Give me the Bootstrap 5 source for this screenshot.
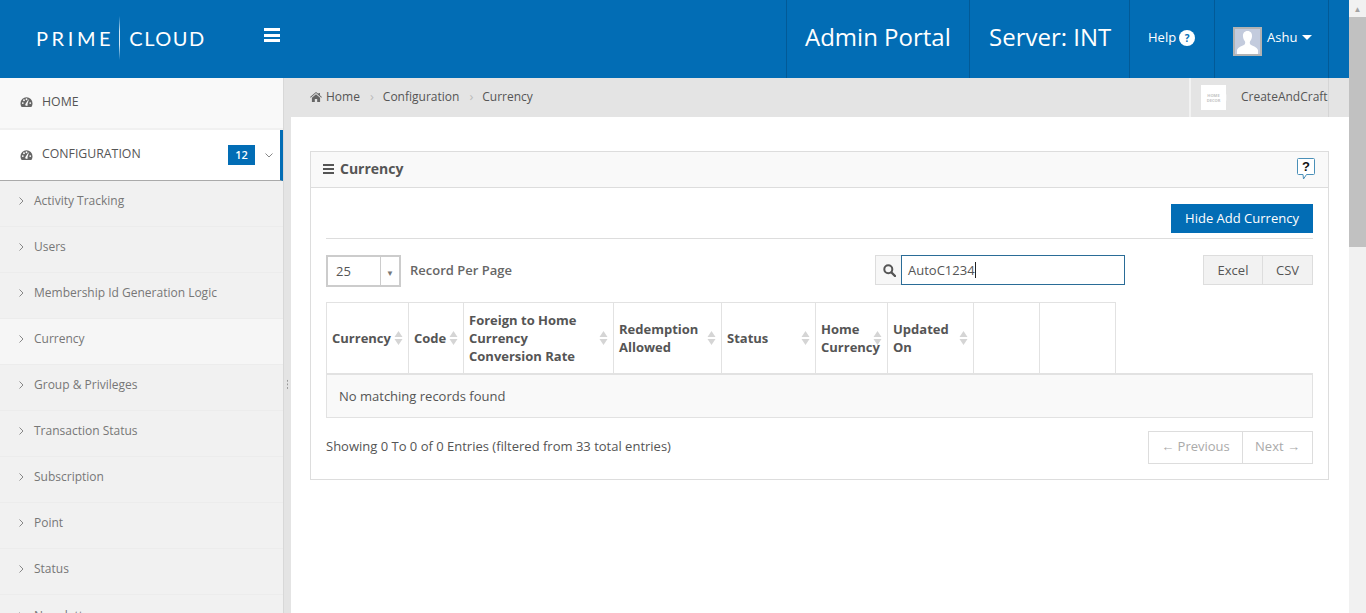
<!DOCTYPE html>
<html lang="en">
<head>
<meta charset="utf-8">
<title>Currency</title>
<link href="https://cdn.jsdelivr.net/npm/bootstrap@5.3.0/dist/css/bootstrap.min.css" rel="stylesheet">
<style>
html,body{height:613px;overflow:hidden}
body{font-family:"Open Sans","Liberation Sans",sans-serif;font-size:13px;color:#555;background:#fff}
.shell{height:613px;overflow:hidden}
.page-col{width:1349px;flex:none}
.body-row{min-height:0}
.main-col{min-width:0}
.sbar{width:17px;flex:none;background:#f1f1f1;position:relative}
.sbar-up{height:17px;color:#a3a3a3;font-size:8px;line-height:17px;text-align:center}
.sbar-thumb{height:230px;background:#c1c1c1}
.top{height:78px;background:#026db5;color:#fff}
.logo-wrap{width:264px;padding-left:36px;padding-bottom:2px;font-family:"Lato","Open Sans",sans-serif;font-weight:400;font-size:20px;letter-spacing:3.6px;line-height:1}
.logo-bar{width:1px;height:44px;background:linear-gradient(#026db5,#cfe5f4 35%,#cfe5f4 65%,#026db5);margin:0 9px 0 5px}
.logo-cloud{letter-spacing:1.5px}
.burger{width:16px;height:14px;border-top:3px solid #fff;border-bottom:3px solid #fff;position:relative;margin-top:-8px}
.burger::after{content:"";position:absolute;left:0;right:0;top:2.5px;height:3px;background:#fff}
.tcell{height:78px;border-left:1px solid #025a97;display:flex;align-items:center;color:#fff}
.t-admin{margin-left:auto;width:183px;font-size:24px;padding-left:18px;padding-bottom:4px}
.t-server{width:160px;font-size:24px;padding-left:19px;padding-bottom:4px}
.t-help{width:85px;padding-left:18px;font-size:13px;padding-bottom:2px}
.t-user{width:115px;padding-left:18px;font-size:13px;border-right:1px solid #025a97}
.t-spacer{width:20px}
.qdot{width:16px;height:16px;border-radius:50%;background:#fff;color:#026db5;font-size:10px;font-weight:700;line-height:16px;text-align:center;margin-left:3px}
.ava{width:29px;height:29px;background:#c3cbdd;border:2px solid #b3b3b3;margin-right:5px;margin-top:5px;display:block}
.ashu{margin-bottom:3px}
.caretd{width:0;height:0;border:5px solid transparent;border-top-color:#fff;border-bottom:0;margin-left:5px;margin-bottom:3px}
.side{width:284px;flex:none;background:#f1f1f1;border-right:1px solid #d8d8d8}
.side-main{height:50px;font-size:12.3px;color:#555;padding-left:20px}
.side-home{background:#f9f9f9;margin-bottom:2px;padding-bottom:2px}
.side-conf{background:#fff;border-right:3px solid #026db5;border-bottom:1px solid #aaa;height:51px;width:283px}
.conf-label{margin-top:-2px}
.ico{fill:#666;margin-right:9px;flex:none}
.cnt{background:#026db5;color:#fff;width:27px;height:20px;font-size:11px;font-weight:600;line-height:20px;text-align:center;margin-left:auto;border-radius:0;padding:0}
.chev{margin:0 7px 0 10px;flex:none}
.sub{height:46px;border-bottom:2px solid #ececec;border-radius:0;background:#f1f1f1;padding:0 0 5px 19px;color:#777;font-size:12px;border-left:0;border-right:0;border-top:0}
.sub.cur{background:#f6f6f6}
.sub svg{margin-right:10px;flex:none}
.gutter{width:7px;flex:none;background:#e4e4e4;padding-top:301px;padding-left:2px}
.grip{width:3px;height:11px;background:radial-gradient(circle,#999 1px,transparent 1px) 0 0/3px 3.6px}
.crumbs{height:39px;background:#e4e4e4;margin-left:-7px;padding-left:26px}
.crumbs .breadcrumb{font-size:12px;margin:0 0 2px;--bs-breadcrumb-item-active-color:#555;--bs-breadcrumb-item-padding-x:10px}
.crumbs .breadcrumb-item{color:#555;display:flex;align-items:center}
.crumbs .breadcrumb-item+.breadcrumb-item::before{content:"›";font-size:13px;color:#bbb;padding-right:9px}
.brandbox{margin-left:auto;width:140px;height:39px;border-left:2px solid #f2f2f2;padding-left:10px;white-space:nowrap;font-size:12px;margin-right:20px;flex:none;overflow:hidden;border-right:1px solid #d5d5d5}
.thumbb{width:25px;height:25px;background:#fff;flex:none;margin-right:15px;color:#c4c4c4;font-size:4px;font-weight:700;line-height:5px;text-align:center;padding-top:8px;box-shadow:10px 0 0 -9.5px #f2f2f2}
.brandname{margin-bottom:2px}
.panel{margin:34px 20px 0 19px;height:329px;border:1px solid #ddd;border-radius:0;--bs-card-bg:#fff}
.panel .card-header{height:36px;background:#f9f9f9;border-bottom:1px solid #ddd;border-radius:0;padding:0 12px 2px;font-size:14px;font-weight:700;color:#555}
.barsi{width:11px;height:10px;border-top:2px solid #555;border-bottom:2px solid #555;position:relative;margin-right:6px}
.barsi::after{content:"";position:absolute;left:0;right:0;top:2px;height:2px;background:#555}
.hbub{margin-left:auto;margin-right:1px}
.panel .card-body{padding:16px 15px 0 15px}
.act{height:35px;border-bottom:1px solid #ddd;margin-bottom:16px}
.btn-blue{background:#026db5;color:#fff;border:0;border-radius:0;font-size:13px;height:29px;width:142px;padding:0;line-height:29px}
.btn-blue:hover{background:#026db5;color:#fff}
.tools{height:32px;margin-bottom:15px}
.picker{width:75px;height:32px;border:2px solid #ccc;font-size:13px;padding-left:8px;padding-top:1px;flex:none;position:relative;color:#555}
.picker-arrow{position:absolute;right:0;top:0;bottom:0;width:19px;border-left:1px solid #ccc;color:#777;font-size:8px;display:flex;align-items:center;justify-content:center;padding-top:3px}
.perpage{margin-left:9px;font-size:13px;font-weight:600;color:#666}
.srch{width:250px;height:30px;margin-left:auto;flex:none;flex-wrap:nowrap}
.srch .input-group-text{width:27px;height:30px;padding:0;justify-content:center;background:#f7f7f7;border:1px solid #ddd;border-right:0;border-radius:0}
.caret-bar{display:inline-block;width:1px;height:16px;background:#222;vertical-align:-3px}
.input-group>.srch-field{flex:1;height:30px;border:1px solid #2a6c97;padding:0 6px;font-size:13px;line-height:28px;color:#555;background:#fff}
.expo{margin-left:78px;height:30px}
.expo .btn{background:#f2f2f2;border:1px solid #ddd;border-radius:0;color:#555;font-size:13px;height:30px;padding:0;line-height:28px}
.x-excel{width:60px}
.x-csv{width:51px}
.thead-tb{table-layout:fixed;width:790px;margin:0;border-collapse:collapse;--bs-table-bg:transparent;--bs-table-color:#555}
.thead-tb th{border:1px solid #e2e2e2;border-bottom:0;height:70px;padding:0 5px;font-size:13px;line-height:18px;font-weight:700;vertical-align:middle;position:relative;color:#555}
.sortg{position:absolute;right:5px;top:50%;margin-top:-8px;width:9px;height:16px;display:block}
.c1{width:82px}.c2{width:55px}.c3{width:150px}.c4{width:108px}.c5{width:94px}.c6{width:72px}.c7{width:86px}.c8{width:66px}.c9{width:76px}
.empty{height:45px;background:#f9f9f9;border:1px solid #e2e2e2;border-top:2px solid #e2e2e2;padding:2px 12px 0;font-size:13px;color:#555}
.foot{margin-top:13px;height:33px;font-size:13px;color:#555}
.pager{margin-left:auto;border:1px solid #ddd;height:33px;color:#aaa;font-size:13px}
.pg-a{width:94px;border-right:1px solid #ddd}
.pg-b{width:69px}
</style>
</head>
<body>
<div class="shell d-flex">
  <div class="page-col d-flex flex-column">
    <header class="top d-flex align-items-center">
      <div class="logo-wrap d-flex align-items-center"><span>PRIME</span><span class="logo-bar"></span><span class="logo-cloud">CLOUD</span></div>
      <div class="burger"></div>
      <div class="tcell t-admin">Admin Portal</div>
      <div class="tcell t-server">Server: INT</div>
      <div class="tcell t-help">Help<span class="qdot">?</span></div>
      <div class="tcell t-user">
        <svg class="ava" viewBox="0 0 25 25"><rect width="25" height="25" fill="#c3cbdd"/><path d="M12.500 2c-3.200 0-4.800 2.400-4.500 5.600.2 2 .9 3.500 1.900 4.700.5.700.4 2.400-.3 3.200C8 17 3 17.800 2 21v4h21v-4c-1-3.200-6-4-7.600-5.500-.7-.8-.8-2.500-.3-3.200 1-1.200 1.700-2.700 1.900-4.700C17.300 4.400 15.700 2 12.500 2z" fill="#fff"/></svg>
        <span class="ashu">Ashu</span><span class="caretd"></span>
      </div>
      <div class="t-spacer"></div>
    </header>
    <div class="body-row d-flex flex-grow-1">
      <aside class="side">
        <div class="side-main side-home d-flex align-items-center">
          <svg class="ico" width="13" height="12" viewBox="0 0 14 12"><path d="M7 1a6.500 6.500 0 0 0-6.500 6.500c0 1.400.4 2.700 1.200 3.800l.3.200h10l.3-.2a6.500 6.500 0 0 0 1.200-3.800A6.500 6.500 0 0 0 7 1zM3 8.200a1 1 0 1 1 0-2 1 1 0 0 1 0 2zm1.300-3.100a1 1 0 1 1 0-2 1 1 0 0 1 0 2zm3.900 4.600a1.500 1.500 0 0 1-2.500-1.400L9 3.400l.5.200-1.500 4.900c.3.300.4.800.2 1.200zM7 4a1 1 0 1 1 0-2 1 1 0 0 1 0 2zm4 4.200a1 1 0 1 1 0-2 1 1 0 0 1 0 2z"/></svg>
          <span>HOME</span>
        </div>
        <div class="side-main side-conf d-flex align-items-center">
          <svg class="ico" width="13" height="12" viewBox="0 0 14 12"><path d="M7 1a6.500 6.500 0 0 0-6.500 6.500c0 1.400.4 2.700 1.200 3.800l.3.200h10l.3-.2a6.500 6.500 0 0 0 1.200-3.800A6.500 6.500 0 0 0 7 1zM3 8.200a1 1 0 1 1 0-2 1 1 0 0 1 0 2zm1.300-3.100a1 1 0 1 1 0-2 1 1 0 0 1 0 2zm3.900 4.600a1.500 1.500 0 0 1-2.500-1.400L9 3.400l.5.200-1.500 4.900c.3.300.4.800.2 1.200zM7 4a1 1 0 1 1 0-2 1 1 0 0 1 0 2zm4 4.200a1 1 0 1 1 0-2 1 1 0 0 1 0 2z"/></svg>
          <span class="conf-label">CONFIGURATION</span>
          <span class="badge cnt">12</span>
          <svg class="chev" width="8" height="5" viewBox="0 0 8 5"><path d="M.5.500 4 4 7.500.500" fill="none" stroke="#888" stroke-width="1"/></svg>
        </div>
        <div class="list-group list-group-flush">
          <div class="list-group-item sub d-flex align-items-center"><svg width="5" height="8" viewBox="0 0 5 8"><path d="M.5.500 4 4 .5 7.500" fill="none" stroke="#888"/></svg>Activity Tracking</div>
          <div class="list-group-item sub d-flex align-items-center"><svg width="5" height="8" viewBox="0 0 5 8"><path d="M.5.500 4 4 .5 7.500" fill="none" stroke="#888"/></svg>Users</div>
          <div class="list-group-item sub d-flex align-items-center"><svg width="5" height="8" viewBox="0 0 5 8"><path d="M.5.500 4 4 .5 7.500" fill="none" stroke="#888"/></svg>Membership Id Generation Logic</div>
          <div class="list-group-item sub cur d-flex align-items-center"><svg width="5" height="8" viewBox="0 0 5 8"><path d="M.5.500 4 4 .5 7.500" fill="none" stroke="#888"/></svg>Currency</div>
          <div class="list-group-item sub d-flex align-items-center"><svg width="5" height="8" viewBox="0 0 5 8"><path d="M.5.500 4 4 .5 7.500" fill="none" stroke="#888"/></svg>Group &amp; Privileges</div>
          <div class="list-group-item sub d-flex align-items-center"><svg width="5" height="8" viewBox="0 0 5 8"><path d="M.5.500 4 4 .5 7.500" fill="none" stroke="#888"/></svg>Transaction Status</div>
          <div class="list-group-item sub d-flex align-items-center"><svg width="5" height="8" viewBox="0 0 5 8"><path d="M.5.500 4 4 .5 7.500" fill="none" stroke="#888"/></svg>Subscription</div>
          <div class="list-group-item sub d-flex align-items-center"><svg width="5" height="8" viewBox="0 0 5 8"><path d="M.5.500 4 4 .5 7.500" fill="none" stroke="#888"/></svg>Point</div>
          <div class="list-group-item sub d-flex align-items-center"><svg width="5" height="8" viewBox="0 0 5 8"><path d="M.5.500 4 4 .5 7.500" fill="none" stroke="#888"/></svg>Status</div>
          <div class="list-group-item sub d-flex align-items-center"><svg width="5" height="8" viewBox="0 0 5 8"><path d="M.5.500 4 4 .5 7.500" fill="none" stroke="#888"/></svg>Newsletter</div>
        </div>
      </aside>
      <div class="gutter"><div class="grip"></div></div>
      <main class="main-col flex-grow-1">
        <div class="crumbs d-flex align-items-center">
          <ol class="breadcrumb">
            <li class="breadcrumb-item"><svg width="12" height="10" viewBox="0 0 13 11" class="me-1"><path d="M6.500 0 0 5.500l.6.700L6.500 1.200l5.900 5 .6-.7-2.200-1.900V1H9.200v1.200zM2 6.400V11h3.200V7.700h2.600V11H11V6.400L6.500 2.600z" fill="#666"/></svg>Home</li>
            <li class="breadcrumb-item">Configuration</li>
            <li class="breadcrumb-item active">Currency</li>
          </ol>
          <div class="brandbox d-flex align-items-center"><span class="thumbb">HOME<br>DECOR</span><span class="brandname">CreateAndCraft</span></div>
        </div>
        <section class="card panel">
          <div class="card-header d-flex align-items-center">
            <span class="barsi"></span><span>Currency</span>
            <svg class="hbub" width="18" height="22" viewBox="0 0 18 22"><path d="M1.500.5h15a1 1 0 0 1 1 1v14a1 1 0 0 1-1 1H9.500L6.500 21l-.5-4.500H1.500a1 1 0 0 1-1-1v-14a1 1 0 0 1 1-1z" fill="#fff" stroke="#4a90b8"/><text x="9" y="13" text-anchor="middle" font-family="Liberation Sans,sans-serif" font-size="13" font-weight="700" fill="#111">?</text></svg>
          </div>
          <div class="card-body">
            <div class="act d-flex justify-content-end align-items-start"><button class="btn btn-blue" type="button">Hide Add Currency</button></div>
            <div class="tools d-flex align-items-start">
              <div class="picker d-flex align-items-center">25<span class="picker-arrow">▼</span></div>
              <span class="perpage align-self-center">Record Per Page</span>
              <div class="input-group srch">
                <span class="input-group-text"><svg width="13" height="13" viewBox="0 0 13 13"><circle cx="5.300" cy="5.300" r="4" fill="none" stroke="#555" stroke-width="2"/><path d="m8.500 8.500 3.500 3.500" stroke="#555" stroke-width="2.400" stroke-linecap="round"/></svg></span>
                <div class="srch-field">AutoC1234<span class="caret-bar"></span></div>
              </div>
              <div class="btn-group expo"><button class="btn x-excel" type="button">Excel</button><button class="btn x-csv" type="button">CSV</button></div>
            </div>
            <table class="table thead-tb">
              <colgroup><col class="c1"><col class="c2"><col class="c3"><col class="c4"><col class="c5"><col class="c6"><col class="c7"><col class="c8"><col class="c9"></colgroup>
              <thead><tr>
                <th>Currency<svg class="sortg" viewBox="0 0 9 16"><path d="M4.500 1 8.500 7H.5zM4.500 15 .5 9h8z" fill="#d5d5d5"/></svg></th>
                <th>Code<svg class="sortg" viewBox="0 0 9 16"><path d="M4.500 1 8.500 7H.5zM4.500 15 .5 9h8z" fill="#d5d5d5"/></svg></th>
                <th>Foreign to Home<br>Currency<br>Conversion Rate<svg class="sortg" viewBox="0 0 9 16"><path d="M4.500 1 8.500 7H.5zM4.500 15 .5 9h8z" fill="#d5d5d5"/></svg></th>
                <th>Redemption Allowed<svg class="sortg" viewBox="0 0 9 16"><path d="M4.500 1 8.500 7H.5zM4.500 15 .5 9h8z" fill="#d5d5d5"/></svg></th>
                <th>Status<svg class="sortg" viewBox="0 0 9 16"><path d="M4.500 1 8.500 7H.5zM4.500 15 .5 9h8z" fill="#d5d5d5"/></svg></th>
                <th>Home Currency<svg class="sortg" viewBox="0 0 9 16"><path d="M4.500 1 8.500 7H.5zM4.500 15 .5 9h8z" fill="#d5d5d5"/></svg></th>
                <th>Updated On<svg class="sortg" viewBox="0 0 9 16"><path d="M4.500 1 8.500 7H.5zM4.500 15 .5 9h8z" fill="#d5d5d5"/></svg></th>
                <th></th><th></th>
              </tr></thead>
            </table>
            <div class="empty d-flex align-items-center">No matching records found</div>
            <div class="foot d-flex align-items-center">
              <span>Showing 0 To 0 of 0 Entries (filtered from 33 total entries)</span>
              <div class="pager d-flex">
                <span class="pg-a d-flex align-items-center justify-content-center">← Previous</span>
                <span class="pg-b d-flex align-items-center justify-content-center">Next →</span>
              </div>
            </div>
          </div>
        </section>
      </main>
    </div>
  </div>
  <div class="sbar"><div class="sbar-up">▲</div><div class="sbar-thumb"></div></div>
</div>
</body>
</html>
